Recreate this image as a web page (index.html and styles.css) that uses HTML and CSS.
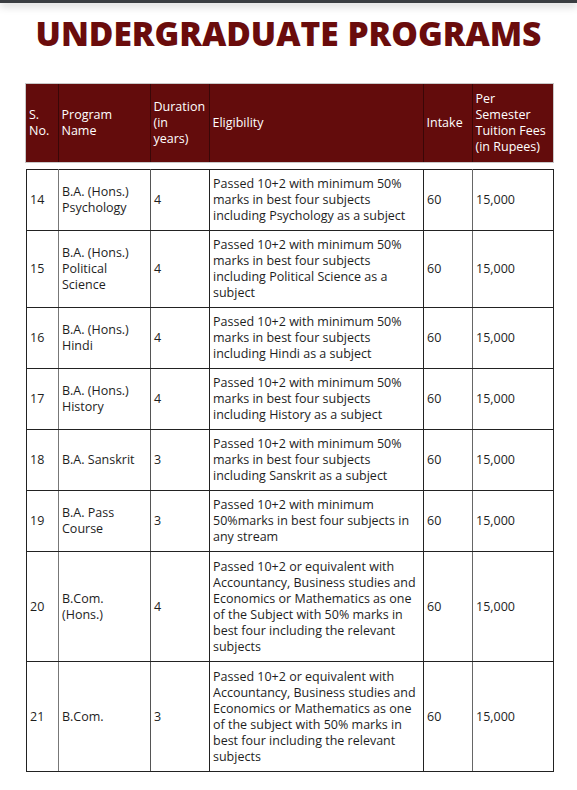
FILE: index.html
```html
<!DOCTYPE html>
<html lang="en">
<head>
<meta charset="utf-8">
<title>Undergraduate Programs</title>
<link rel="stylesheet" href="styles.css">
</head>
<body>
<div class="topbar"></div>
<h1 class="title">UNDERGRADUATE PROGRAMS</h1>
<div class="tables">
<table class="grid head">
  <colgroup><col class="c1"><col class="c2"><col class="c3"><col class="c4"><col class="c5"><col class="c6"></colgroup>
  <tr>
    <th>S.<br>No.</th>
    <th>Program<br>Name</th>
    <th>Duration<br>(in<br>years)</th>
    <th>Eligibility</th>
    <th>Intake</th>
    <th>Per<br>Semester<br>Tuition Fees<br>(in Rupees)</th>
  </tr>
</table>
<table class="grid body">
  <colgroup><col class="c1"><col class="c2"><col class="c3"><col class="c4"><col class="c5"><col class="c6"></colgroup>
  <tr class="r3"><td>14</td><td>B.A. (Hons.)<br>Psychology</td><td>4</td><td>Passed 10+2 with minimum 50%<br>marks in best four subjects<br>including Psychology as a subject</td><td>60</td><td>15,000</td></tr>
  <tr class="r4"><td>15</td><td>B.A. (Hons.)<br>Political<br>Science</td><td>4</td><td>Passed 10+2 with minimum 50%<br>marks in best four subjects<br>including Political Science as a<br>subject</td><td>60</td><td>15,000</td></tr>
  <tr class="r3"><td>16</td><td>B.A. (Hons.)<br>Hindi</td><td>4</td><td>Passed 10+2 with minimum 50%<br>marks in best four subjects<br>including Hindi as a subject</td><td>60</td><td>15,000</td></tr>
  <tr class="r3"><td>17</td><td>B.A. (Hons.)<br>History</td><td>4</td><td>Passed 10+2 with minimum 50%<br>marks in best four subjects<br>including History as a subject</td><td>60</td><td>15,000</td></tr>
  <tr class="r3"><td>18</td><td>B.A. Sanskrit</td><td>3</td><td>Passed 10+2 with minimum 50%<br>marks in best four subjects<br>including Sanskrit as a subject</td><td>60</td><td>15,000</td></tr>
  <tr class="r3"><td>19</td><td>B.A. Pass<br>Course</td><td>3</td><td>Passed 10+2 with minimum<br>50%marks in best four subjects in<br>any stream</td><td>60</td><td>15,000</td></tr>
  <tr class="r6"><td>20</td><td>B.Com.<br>(Hons.)</td><td>4</td><td>Passed 10+2 or equivalent with<br>Accountancy, Business studies and<br>Economics or Mathematics as one<br>of the Subject with 50% marks in<br>best four including the relevant<br>subjects</td><td>60</td><td>15,000</td></tr>
  <tr class="r6"><td>21</td><td>B.Com.</td><td>3</td><td>Passed 10+2 or equivalent with<br>Accountancy, Business studies and<br>Economics or Mathematics as one<br>of the subject with 50% marks in<br>best four including the relevant<br>subjects</td><td>60</td><td>15,000</td></tr>
</table>
</div>
</body>
</html>
```

FILE: styles.css
```css
html, body {
  margin: 0;
  padding: 0;
  background: #ffffff;
}
body {
  font-family: "Open Sans", "Liberation Sans", sans-serif;
  color: #1a1a1a;
}
.topbar {
  height: 3px;
  background: #3a3d41;
  box-shadow: 0 2px 8px rgba(0, 0, 0, 0.35);
}
.title {
  margin: 10px 0 0;
  text-align: center;
  font-size: 33.5px;
  font-weight: 800;
  line-height: 40px;
  color: #6a0c0c;
  letter-spacing: 0;
}
.tables {
  padding: 31px 0 0 26px;
}
.grid {
  border-collapse: collapse;
  table-layout: fixed;
  width: 527px;
  font-size: 12.5px;
  line-height: 16px;
}
.c1 { width: 32px; }
.c2 { width: 92px; }
.c3 { width: 59px; }
.c4 { width: 214px; }
.c5 { width: 49px; }
.c6 { width: 81px; }
.head {
  background: #630c0c;
  outline: 1px solid #c8c8c8;
}
.head th {
  color: #ffffff;
  font-weight: 400;
  text-align: left;
  vertical-align: middle;
  padding: 7px 3px;
  height: 63px;
  border-left: 1px solid #3a0707;
}
.head th:first-child { border-left: none; }
.body {
  margin-top: 7px;
  border: 1px solid #222;
}
.body td {
  border: 1px solid #222;
  padding: 6px 3px;
  vertical-align: middle;
  color: #1e1e1e;
  white-space: nowrap;
}
.body td:first-child { border-right-color: #777; }
.body td:nth-child(2) { border-right-color: #555; }
.body td:nth-child(5) { border-right-color: #666; }
.r3 td { height: 48px; }
.r4 td { height: 64px; }
.r6 td { height: 97px; }
```
